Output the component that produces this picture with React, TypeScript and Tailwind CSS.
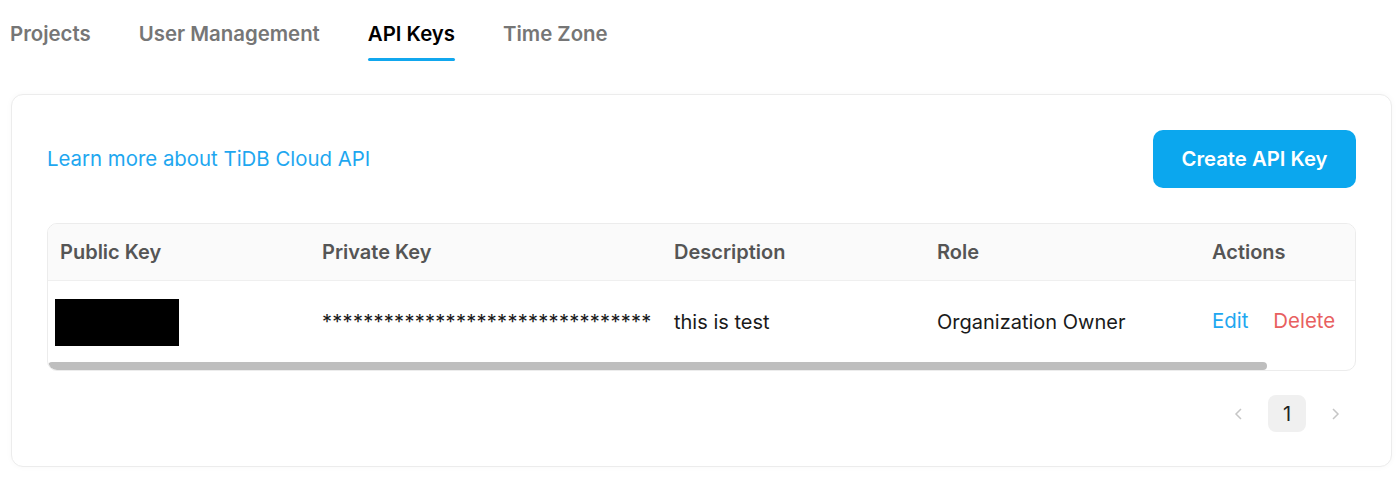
import React from 'react';

const tabs = ['Projects', 'User Management', 'API Keys', 'Time Zone'];

const columns = [
  { title: 'Public Key', w: 'w-[274px] pl-[12px]' },
  { title: 'Private Key', w: 'w-[352px]' },
  { title: 'Description', w: 'w-[263px]' },
  { title: 'Role', w: 'w-[275px]' },
  { title: 'Actions', w: 'flex-1' },
];

export default function App() {
  return (
    <div className="min-h-[477px] bg-white font-['Inter',sans-serif] pl-[11px] pr-[8px]">
      {/* Tabs */}
      <div className="flex gap-[48px] h-[61px] -ml-[1px]">
        {tabs.map((t) => {
          const active = t === 'API Keys';
          return (
            <div key={t} className="relative flex items-start pt-[20px]">
              <span
                className={`text-[20.4px] font-semibold leading-[28px] ${
                  active ? 'text-black' : 'text-[#767676]'
                }`}
              >
                {t}
              </span>
              {active && (
                <div className="absolute left-0 right-0 bottom-0 h-[3px] rounded-full bg-[#11a7ee]" />
              )}
            </div>
          );
        })}
      </div>

      {/* Card */}
      <div className="mt-[33px] h-[373px] rounded-[12px] border border-[#ececec] bg-white shadow-[0_0_6px_rgba(0,0,0,0.03)] px-[35px] pt-[35px]">
        <div className="flex items-center justify-between">
          <a className="text-[20.4px] text-[#1ea7f0] leading-none cursor-pointer">
            Learn more about TiDB Cloud API
          </a>
          <button className="h-[58px] w-[203px] rounded-[10px] bg-[#0ba7ee] text-white text-[20.3px] font-semibold">
            Create API Key
          </button>
        </div>

        {/* Table */}
        <div className="mt-[35px] rounded-[10px] border border-[#ececec] overflow-hidden">
          <div className="flex h-[57px] items-center bg-[#fafafa] border-b border-[#efefef]">
            {columns.map((c) => (
              <div key={c.title} className={`${c.w} text-[20px] font-semibold text-[#555]`}>
                {c.title}
              </div>
            ))}
          </div>
          <div className="flex h-[81px] items-center text-[20px] text-[#1a1a1a]">
            <div className="w-[274px] pl-[7px] pt-[2px]">
              <div className="w-[124px] h-[47px] bg-black" />
            </div>
            <div className="w-[352px] text-[20px] tracking-[0.28px]">
              ********************************
            </div>
            <div className="w-[263px]">this is test</div>
            <div className="w-[275px]">Organization Owner</div>
            <div className="flex-1 flex gap-[25px] text-[20.4px]">
              <span className="text-[#1ea7f0]">Edit</span>
              <span className="text-[#e86060]">Delete</span>
            </div>
          </div>
          <div className="h-[8px] w-[1219px] rounded-full bg-[#bebebe]" />
        </div>

        {/* Pagination */}
        <div className="flex justify-end items-center mt-[24px] pr-[14px] gap-[22px]">
          <svg width="14" height="14" viewBox="0 0 14 14" fill="none">
            <path d="M9 2 L4 7 L9 12" stroke="#c6c6c6" strokeWidth="1.5" />
          </svg>
          <div className="w-[38px] h-[37px] rounded-[8px] bg-[#f0f0f0] flex items-center justify-center text-[20px] text-[#222]">
            1
          </div>
          <svg width="14" height="14" viewBox="0 0 14 14" fill="none">
            <path d="M5 2 L10 7 L5 12" stroke="#c6c6c6" strokeWidth="1.5" />
          </svg>
        </div>
      </div>
    </div>
  );
}
